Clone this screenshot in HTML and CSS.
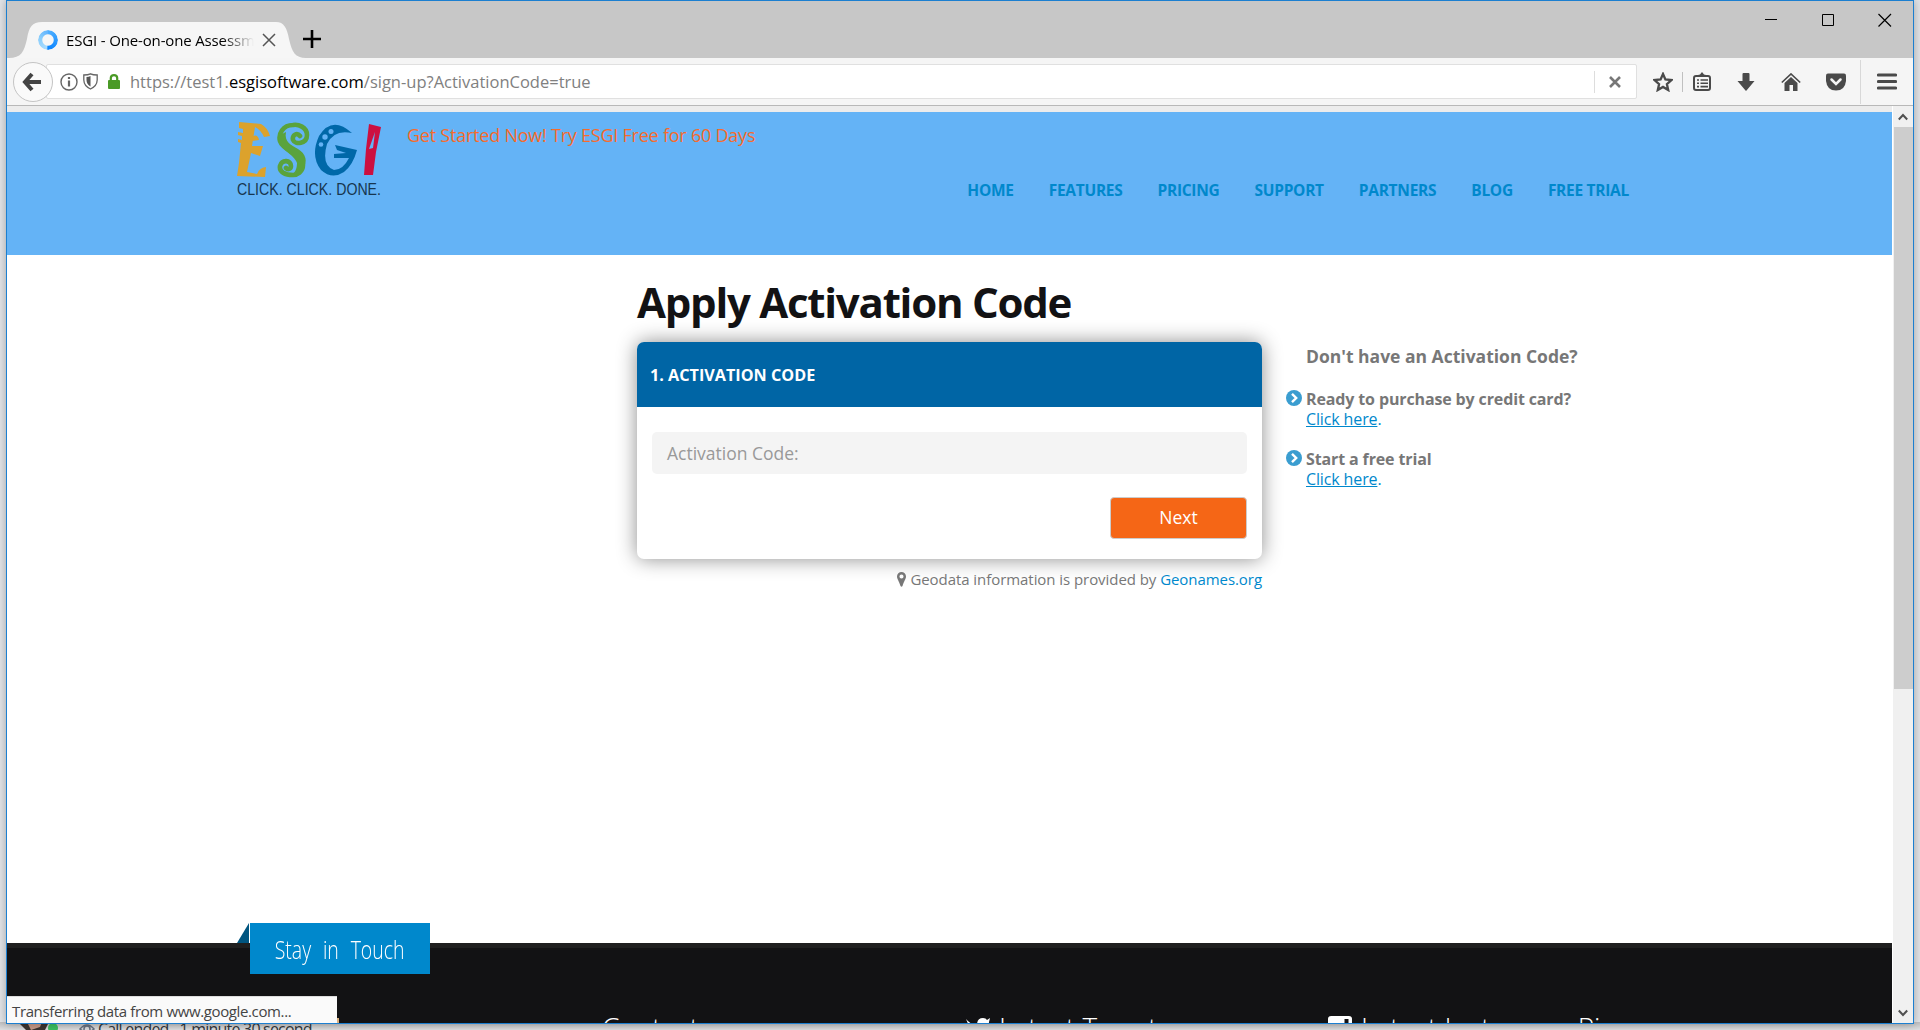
FILE: index.html
```html
<!DOCTYPE html>
<html lang="en">
<head>
<meta charset="utf-8">
<title>ESGI - One-on-one Assessment</title>
<link rel="stylesheet" href="styles.css">
</head>
<body>
<div class="desktop-status"><svg class="avatar" width="50" height="8" viewBox="0 0 50 8"><path d="M0 0H31L27 8H8Z" fill="#3c3430"/><path d="M9 0h15l-2 5-9 3z" fill="#c89a88"/><circle cx="35" cy="6" r="5" fill="#3cc060"/></svg><svg class="eye" width="16" height="8" viewBox="0 0 16 8"><path d="M1 6Q8-2 15 6Q8 12 1 6Z" fill="none" stroke="#667080" stroke-width="1.5"/><circle cx="8" cy="6" r="3" fill="none" stroke="#667080" stroke-width="1.5"/></svg><span class="call">Call ended - 1 minute 30 second</span></div>
<div class="window">
  <div class="tabstrip">
    <div class="tab">
      <svg class="tab-shape" width="298" height="37" viewBox="0 0 298 37"><path d="M0 37C12 37 15 31 18 18C20 6 23 1 33 1H267C275 1 278 7 280 18C283 31 286 37 297 37Z" fill="#f6f6f6"/></svg>
      <div class="tab-content">
        <span class="spinner"></span>
        <span class="tab-title"><span>ESGI - One-on-one Assessment</span></span>
        <svg width="14" height="14" viewBox="0 0 14 14"><path d="M1 1L13 13M13 1L1 13" stroke="#555" stroke-width="1.5"/></svg>
      </div>
    </div>
    <svg class="newtab" width="18" height="18" viewBox="0 0 18 18"><path d="M9 0V18M0 9H18" stroke="#000" stroke-width="2.6"/></svg>
    <div class="controls">
      <svg width="12" height="14" viewBox="0 0 12 14"><path d="M0 6.5H12" stroke="#000"/></svg>
      <svg width="12" height="14" viewBox="0 0 12 14"><path d="M.5 1.5H11.5V12.5H.5Z" fill="none" stroke="#000"/></svg>
      <svg width="14" height="14" viewBox="0 0 14 14"><path d="M.5 1L13 13.5M13 1L.5 13.5" stroke="#000" stroke-width="1.2"/></svg>
    </div>
  </div>
  <div class="toolbar">
    <div class="back"><svg width="22" height="22" viewBox="0 0 22 22"><path d="M11 3L4 11L11 19M4.500 11H20" transform="translate(-1 0)" fill="none" stroke="#444" stroke-width="4"/></svg></div>
    <div class="urlbar">
      <svg width="18" height="18" viewBox="0 0 18 18"><circle cx="9" cy="9" r="8" fill="none" stroke="#666" stroke-width="1.4"/><path d="M9 4V6M9 7.500V13.500" stroke="#666" stroke-width="2.2"/></svg>
      <svg class="shield" width="15" height="17" viewBox="0 0 15 17"><path d="M.8 2Q5 2 7.500.8Q10 2 14.200 2V7Q14 13 7.500 16Q1 13 .8 7Z" fill="none" stroke="#666" stroke-width="1.3"/><path d="M7.500 3Q6 4 3.500 4V7Q3.500 11 7.500 13.500Z" fill="#555"/></svg>
      <svg class="lock" width="12" height="15" viewBox="0 0 12 15"><path d="M2.800 7V4Q2.800 1.200 6 1.200Q9.200 1.200 9.200 4V7" fill="none" stroke="#4a9a26" stroke-width="2.2"/><rect y="6" width="12" height="9" rx="1" fill="#4a9a26"/></svg>
      <span class="url">https://test1.<b>esgisoftware.com</b>/sign-up?ActivationCode=true</span>
      <div class="stop"><svg width="12" height="12" viewBox="0 0 12 12"><path d="M1 1L11 11M11 1L1 11" stroke="#777" stroke-width="2.6"/></svg></div>
    </div>
    <svg class="ic star" width="20" height="20" viewBox="0 0 20 20"><path d="M10 2L12.400 7.500L18.400 8.100L13.900 12.100L15.200 18L10 14.900L4.800 18L6.100 12.100L1.600 8.100L7.600 7.500Z" fill="none" stroke="#4a4a4a" stroke-width="2.300"/></svg>
    <i class="sep short"></i>
    <svg class="ic clip" width="18" height="19" viewBox="0 0 18 19"><path d="M5 3L7 2.500L9 0L11 2.500L13 3V5H5Z" fill="#4a4a4a"/><rect x="1" y="4" width="16" height="14" rx="2" fill="none" stroke="#4a4a4a" stroke-width="2"/><path d="M4 8H6M7.500 8H15M4 11.300H6M7.500 11.300H15M4 14.600H6M7.500 14.600H15" stroke="#4a4a4a" stroke-width="1.600"/></svg>
    <svg class="ic down" width="18" height="18" viewBox="0 0 18 18"><path d="M5.500 1Q5.500 0 6.500 0H11.500Q12.500 0 12.500 1V8H17.500L9.500 17.500Q9 18 8.500 17.500L.5 8H5.500Z" fill="#4a4a4a"/></svg>
    <svg class="ic home" width="20" height="18" viewBox="0 0 20 18"><path d="M.8 9.500L10 1L19.200 9.500" fill="none" stroke="#4a4a4a" stroke-width="1.700"/><path d="M3.500 10L10 4L16.500 10V18H12V12H8.500V18H3.500Z" fill="#4a4a4a"/></svg>
    <svg class="ic pocket" width="20" height="18" viewBox="0 0 20 18"><path d="M2 .5H18Q20 .5 20 2.500V8Q19 17.500 10 17.500Q1 17.500 0 8V2.500Q0 .5 2 .5Z" fill="#4a4a4a"/><path d="M5.500 6.500L10 11L14.500 6.500" fill="none" stroke="#f5f5f5" stroke-width="2.500" stroke-linecap="round"/></svg>
    <i class="sep"></i>
    <svg class="ic menu" width="20" height="17" viewBox="0 0 20 17"><path d="M1.500 2H18.500M1.500 8.500H18.500M1.500 15H18.500" stroke="#4a4a4a" stroke-width="3.200" stroke-linecap="round"/></svg>
  </div>
  <div class="viewport">
    <main class="page">
      <header class="site-header">
        <svg class="logo" width="146" height="76" viewBox="0 0 146 76">
          <path d="M2 0L24 2Q31 6 33 14L27 15Q24 8 18 5L15 24L26 24L23 34L14 31L10 50L20 52Q22 46 29 45L28 55L0 54L2 41L4 21L1 20V17L5 18V14L1 13V10L6 11V7L2 6Z" fill="#dca22c"/><path d="M16 14Q21 12 22 18L15 19Z" fill="#dca22c"/>
          <path d="M63 14C60 10 55 13 56 18C58 23 70 22 70 13C70 5 61 2 56 3C46 3 41 12 43 19C46 29 66 32 66 43C66 50 60 53 56 53C48 53 42 50 43 44C45 37 54 38 54 44C54 47 51 48 49 46" fill="none" stroke="#5aa33c" stroke-width="4.600" stroke-linecap="round"/><path d="M41 14C41 27 57 32 60 41C60 47 58 50 56 52L66 47C71 39 69 32 61 27C54 23 47 20 49 10Z" fill="#5aa33c"/>
          <path d="M115 11Q95-7 82 14Q73 34 84 48Q95 58 107 50Q116 43 120 28L98 23L100 28L109 31L97 32L97 36L112 36Q106 48 97 48Q84 43 90 22Q97 7 115 11Z" fill="#0068a8"/><g fill="#64b3f6"><circle cx="94" cy="9.500" r="2.500"/><circle cx="88" cy="15" r="2.700"/><circle cx="84" cy="22.500" r="2.300"/></g>
          <path d="M132 2L144 5L139 30L136 53L127 53L129 27Z" fill="#cc1040"/><path d="M138 10L132 27L136 26Z" fill="#64b3f6"/>
          <text class="logo-tag" x="0" y="72.500" textLength="144" lengthAdjust="spacingAndGlyphs">CLICK. CLICK. DONE.</text>
        </svg>
        <div class="header-main">
          <p class="promo">Get Started Now! Try ESGI Free for 60 Days</p>
          <nav class="nav"><a>HOME</a><a>FEATURES</a><a>PRICING</a><a>SUPPORT</a><a>PARTNERS</a><a>BLOG</a><a>FREE TRIAL</a></nav>
        </div>
      </header>
      <section class="content">
        <div class="form-col">
          <h1>Apply Activation Code</h1>
          <div class="card">
            <div class="card-head">1. ACTIVATION CODE</div>
            <div class="card-body">
              <div class="field">Activation Code:</div>
              <div class="next">Next</div>
            </div>
          </div>
          <p class="geo"><svg width="9" height="15" viewBox="0 0 9 15"><path fill-rule="evenodd" d="M4.500 0A4.500 4.500 0 0 1 9 4.500C9 7 7 9 5.500 14Q4.500 15.500 3.500 14C2 9 0 7 0 4.500A4.500 4.500 0 0 1 4.500 0ZM4.500 2.500A2 2 0 1 0 4.500 6.600A2 2 0 1 0 4.500 2.500Z" fill="#777"/></svg><span>Geodata information is provided by <a>Geonames.org</a></span></p>
        </div>
        <aside class="help">
          <h2>Don't have an Activation Code?</h2>
          <div class="help-item"><svg width="16" height="16" viewBox="0 0 16 16"><circle cx="8" cy="8" r="8" fill="#3a9dd0"/><path d="M6 3.800L10.200 8L6 12.200" fill="none" stroke="#fff" stroke-width="2.400"/></svg><p><b>Ready to purchase by credit card?</b><br><a>Click here</a>.</p></div>
          <div class="help-item"><svg width="16" height="16" viewBox="0 0 16 16"><circle cx="8" cy="8" r="8" fill="#3a9dd0"/><path d="M6 3.800L10.200 8L6 12.200" fill="none" stroke="#fff" stroke-width="2.400"/></svg><p><b>Start a free trial</b><br><a>Click here</a>.</p></div>
        </aside>
      </section>
      <footer class="footer">
        <div class="ribbon"><span>Stay in Touch</span></div>
        <div class="cols">
          <h4></h4><h4>Contact</h4>
          <h4><svg class="bird" width="25" height="20" viewBox="0 0 25 20"><path d="M1 1Q6 7 12 7Q12 0 18 0Q21 0 22 2L25 0L24 4Q23 18 10 20L0 18Q6 17 7 15Z" fill="#fff"/></svg><span>Latest Tweets</span></h4>
          <h4><svg class="insta" width="24" height="24" viewBox="0 0 24 24"><rect width="24" height="24" rx="3" fill="#fff"/><rect x="16.500" y="3" width="4" height="4" fill="#121214"/></svg><span>Latest Instagram Pics</span></h4>
        </div>
      </footer>
      <div class="status">Transferring data from www.google.com...</div>
    </main>
    <div class="scrollbar">
      <svg width="10" height="8" viewBox="0 0 10 8"><path d="M.8 6.500L5 2L9.200 6.500" fill="none" stroke="#505050" stroke-width="2"/></svg>
      <div class="thumb"></div>
      <svg class="dn" width="10" height="8" viewBox="0 0 10 8"><path d="M.8 1.500L5 6L9.200 1.500" fill="none" stroke="#505050" stroke-width="2"/></svg>
    </div>
  </div>
</div>
</body>
</html>
```
FILE: styles.css
```css
* { box-sizing: border-box; }
body { margin: 0; width: 1920px; height: 1030px; overflow: hidden; position: relative; background: #e3e5e8; font-family: "Open Sans", "Noto Sans", sans-serif; }
h1, h2, h4, p { margin: 0; font-weight: 400; }
svg { display: block; flex: none; }
span, a, b { white-space: nowrap; }
.desktop-status { position: absolute; left: 0; right: 0; top: 1022px; height: 8px; overflow: hidden; background: linear-gradient(#bfbfc0, #dedfe1); }
.avatar { position: absolute; left: 18px; top: 0; }
.eye { position: absolute; left: 79px; top: 1px; }
.call { position: absolute; left: 98px; top: -4px; font-size: 16px; line-height: 22px; letter-spacing: -.8px; color: #33363a; }
.window { position: relative; margin-left: 6px; width: 1908px; height: 1024px; border: 1px solid #1c7fd0; background: #f5f5f5; box-shadow: 0 0 9px rgba(0,0,0,.3); display: flex; flex-direction: column; overflow: hidden; }
.tabstrip { height: 57px; background: #c7c7c7; display: flex; align-items: flex-end; flex: none; }
.tab { position: relative; width: 292px; height: 37px; margin-left: 2px; }
.tab-shape { position: absolute; left: 0; top: 0; }
.tab-content { position: relative; display: flex; align-items: center; height: 37px; padding-left: 29px; }
.spinner { width: 20px; height: 20px; border-radius: 50%; background: conic-gradient(#50b0ff, #0a84ff 50%, #a8dcff 53%, #88ccfb 80%, #60b4ff); -webkit-mask: radial-gradient(circle, transparent 5.2px, #000 6.200px); mask: radial-gradient(circle, transparent 5.2px, #000 6.200px); }
.tab-title { margin-left: 8px; width: 188px; overflow: hidden; font-size: 15px; letter-spacing: -.15px; -webkit-mask: linear-gradient(90deg, #000 83%, transparent); mask: linear-gradient(90deg, #000 83%, transparent); margin-right: 8px; }
.newtab { margin: 0 0 10px 2px; }
.controls { display: flex; gap: 45px; align-self: flex-start; margin: 12px 20px 0 auto; }
.controls svg:last-child { margin-left: -1px; margin-right: 1px; }
.toolbar { height: 48px; flex: none; display: flex; align-items: center; border-bottom: 1px solid #b8b8b8; }
.back { width: 40px; height: 40px; border-radius: 50%; border: 1px solid #c4c4c4; background: #fafafa; margin-left: 6px; display: flex; align-items: center; justify-content: center; position: relative; z-index: 1; }
.urlbar { height: 35px; width: 1591px; margin-left: -7px; border: 1px solid #e0e0e0; border-radius: 2px; background: #fff; display: flex; align-items: center; padding-left: 13px; }
.shield { margin-left: 5px; }
.lock { margin-left: 10px; }
.url { font-size: 16.5px; color: #808080; margin-left: 10px; }
.url b { font-weight: 400; color: #000; }
.stop { margin-left: auto; width: 42px; height: 22px; border-left: 1px solid #ddd; display: flex; align-items: center; justify-content: center; padding-right: 2px; }
.sep { width: 1px; height: 44px; background: #d8d8d8; }
.sep.short { height: 20px; background: #c0c0c0; margin-left: 9px; }
.star { margin-left: 16px; }
.clip { margin-left: 10px; }
.down { margin-left: 26px; }
.home { margin-left: 26px; }
.pocket { margin-left: 25px; }
.pocket + .sep { margin-left: 14px; }
.menu { margin-left: 16px; }
.viewport { flex: 1; display: flex; min-height: 0; }
.page { width: 1885px; position: relative; background: #fff; border-top: 6px solid #ececec; display: flex; flex-direction: column; }
.site-header { height: 143px; background: #64b3f6; padding: 10px 0 0 230px; display: flex; flex: none; }
.logo-tag { font-family: "Liberation Sans", sans-serif; font-size: 16px; fill: #17364f; }
.header-main { margin-left: 24px; width: 1222px; }
.promo { font-size: 18px; line-height: 26px; letter-spacing: -.23px; color: #f66b2c; }
.nav { display: flex; gap: 35px; justify-content: flex-end; margin-top: 31px; font-size: 15.5px; letter-spacing: -.28px; font-weight: 700; line-height: 22px; color: #0088cc; }
.content { flex: 1; padding: 18px 0 0 630px; display: flex; }
.form-col { width: 625px; }
h1 { font-size: 42px; font-weight: 700; line-height: 58px; height: 69px; letter-spacing: -1.25px; color: #121214; }
.card { height: 217px; border-radius: 7px; background: #fff; box-shadow: 0 0 20px rgba(0,0,0,.45); overflow: hidden; }
.card-head { height: 65px; background: #0065a5; color: #fff; font-weight: 700; font-size: 16.2px; line-height: 67px; padding-left: 13px; }
.card-body { padding: 25px 15px; display: flex; flex-direction: column; align-items: flex-end; }
.field { align-self: stretch; height: 42px; background: #f4f4f4; border-radius: 5px; font-size: 17.5px; line-height: 42px; padding-left: 15px; color: #999; }
.next { margin-top: 23px; width: 137px; height: 42px; border: 1px solid #ccc; border-radius: 4px; background: #f56616; color: #fff; font-size: 17.5px; line-height: 39px; text-align: center; }
.geo { display: flex; justify-content: flex-end; align-items: center; gap: 4px; margin-top: 8px; font-size: 15px; line-height: 24px; letter-spacing: -.06px; color: #777; }
.geo a, .help a { color: #0088cc; }
.help { padding: 71px 0 0 24px; color: #777; }
h2 { font-size: 17.500px; font-weight: 700; line-height: 24px; padding-left: 20px; margin-bottom: 21px; }
.help-item { display: flex; gap: 4px; font-size: 16px; line-height: 20px; height: 60px; }
.help-item svg { margin-top: 1px; }
.help-item p { color: #0088cc; letter-spacing: -.13px; }
.help-item b { color: #777; }
.help-item a { text-decoration: underline; }
.footer { height: 80px; flex: none; background: #121214; border-top: 5px solid #1f1f1f; position: relative; overflow: visible; }
.ribbon { position: absolute; left: 243px; top: -25px; width: 180px; height: 51px; background: #0088cc; color: #fff; font-size: 26px; font-weight: 300; line-height: 53px; text-align: center; }
.ribbon span { display: inline-block; transform: scaleX(.75); margin: 0 -20px; word-spacing: 9px; }
.ribbon::before { content: ""; position: absolute; left: -13px; top: 0; border-left: 12px solid transparent; border-bottom: 20px solid #005580; }
.cols { display: grid; grid-template-columns: repeat(4, 363px); padding: 62px 0 0 232px; height: 75px; overflow: hidden; }
.cols h4 { display: flex; gap: 9px; font-size: 28px; font-weight: 300; line-height: 34px; color: #fff; }
.bird { margin-top: 8px; }
.insta { margin-top: 6px; }
.status { position: absolute; left: 0; bottom: 0; width: 330px; height: 27px; background: #fafafa; border-top: 1px solid #ddd; font-size: 15px; line-height: 29px; padding-left: 5px; letter-spacing: -.37px; color: #444; }
.status::after { content: ""; position: absolute; left: 330px; bottom: 0; width: 2px; height: 5px; background: #d8b080; }
.scrollbar { flex: 1; background: #f0f0f0; border-left: 1px solid #fff; display: flex; flex-direction: column; align-items: center; padding-top: 7px; }
.thumb { width: 19px; height: 562px; background: #cdcdcd; margin-top: 6px; }
.dn { margin: auto 0 6px; }
```
